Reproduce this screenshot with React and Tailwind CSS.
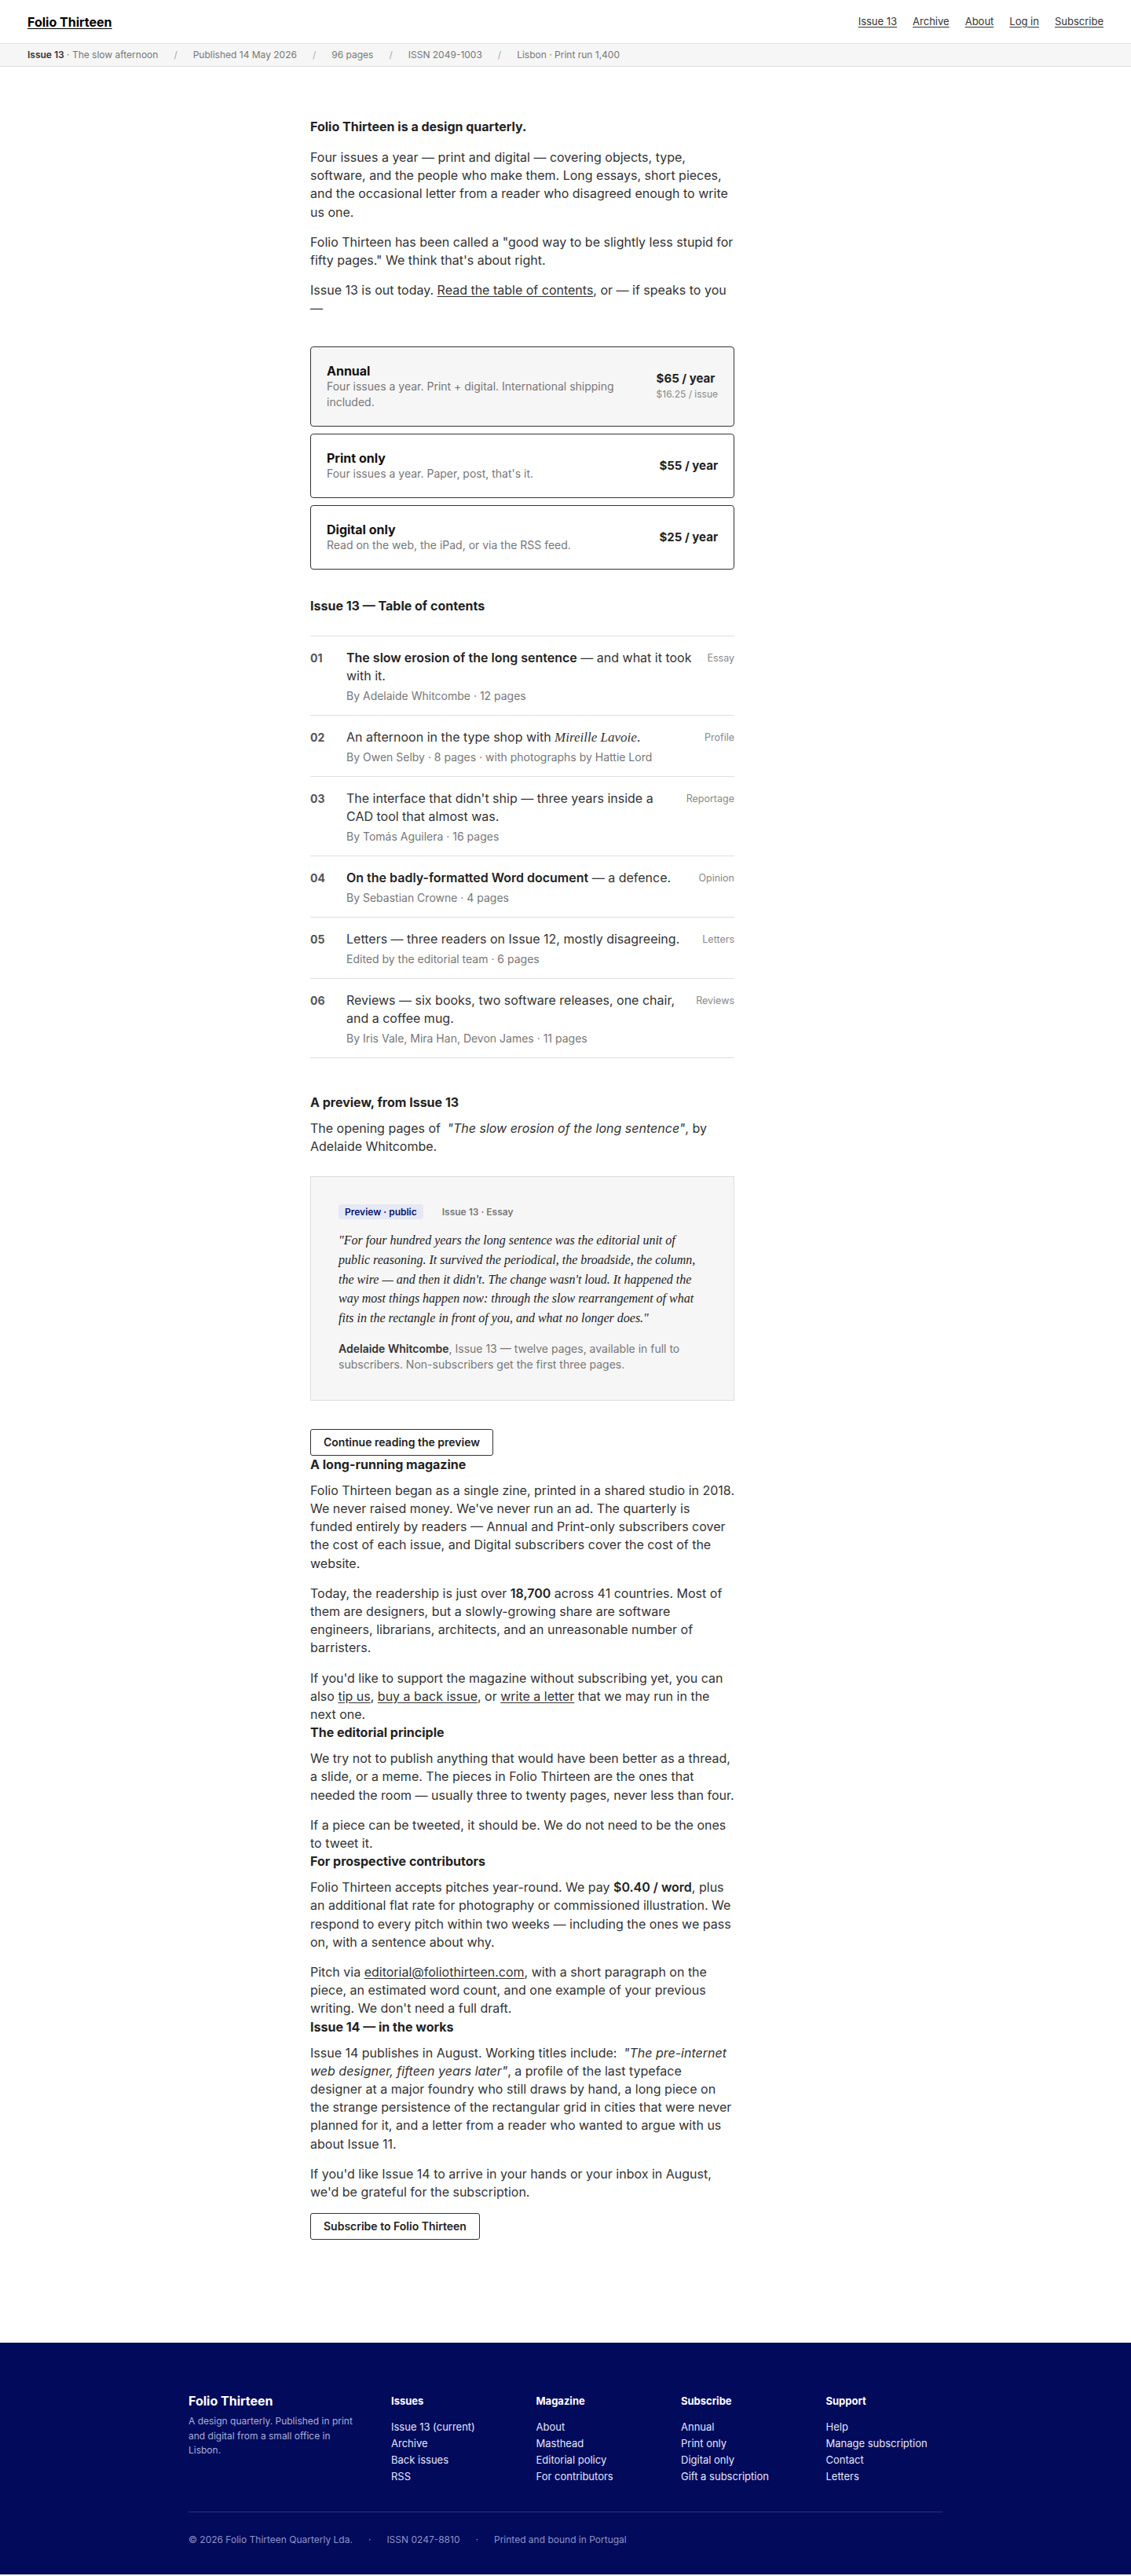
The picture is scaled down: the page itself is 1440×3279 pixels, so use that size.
const navLinks = ['Issue 13', 'Archive', 'About', 'Log in', 'Subscribe']

const plans = [
  {
    name: 'Annual',
    desc: 'Four issues a year. Print + digital. International shipping included.',
    price: '$65 / year',
    sub: '$16.25 / issue',
    active: true,
  },
  { name: 'Print only', desc: "Four issues a year. Paper, post, that's it.", price: '$55 / year' },
  { name: 'Digital only', desc: 'Read on the web, the iPad, or via the RSS feed.', price: '$25 / year' },
]

const toc = [
  {
    n: '01',
    title: (
      <>
        <strong className="font-semibold text-[#222]">The slow erosion of the long sentence</strong> — and what it took
        with it.
      </>
    ),
    meta: 'By Adelaide Whitcombe · 12 pages',
    tag: 'Essay',
  },
  {
    n: '02',
    title: (
      <>
        An afternoon in the type shop with{' '}
        <em className="font-['Liberation_Serif',serif] text-[17px]">Mireille Lavoie</em>.
      </>
    ),
    meta: 'By Owen Selby · 8 pages · with photographs by Hattie Lord',
    tag: 'Profile',
  },
  {
    n: '03',
    title: "The interface that didn't ship — three years inside a CAD tool that almost was.",
    meta: 'By Tomás Aguilera · 16 pages',
    tag: 'Reportage',
  },
  {
    n: '04',
    title: (
      <>
        <strong className="font-semibold text-[#222]">On the badly-formatted Word document</strong> — a defence.
      </>
    ),
    meta: 'By Sebastian Crowne · 4 pages',
    tag: 'Opinion',
  },
  {
    n: '05',
    title: 'Letters — three readers on Issue 12, mostly disagreeing.',
    meta: 'Edited by the editorial team · 6 pages',
    tag: 'Letters',
  },
  {
    n: '06',
    title: 'Reviews — six books, two software releases, one chair, and a coffee mug.',
    meta: 'By Iris Vale, Mira Han, Devon James · 11 pages',
    tag: 'Reviews',
  },
]

const footerCols = [
  { title: 'Issues', links: ['Issue 13 (current)', 'Archive', 'Back issues', 'RSS'] },
  { title: 'Magazine', links: ['About', 'Masthead', 'Editorial policy', 'For contributors'] },
  { title: 'Subscribe', links: ['Annual', 'Print only', 'Digital only', 'Gift a subscription'] },
  { title: 'Support', links: ['Help', 'Manage subscription', 'Contact', 'Letters'] },
]

function Heading({ children, className = '' }) {
  return <h2 className={`text-base font-bold leading-[23px] text-[#222] ${className}`}>{children}</h2>
}

function OutlineButton({ children, className = '' }) {
  return (
    <button
      className={`flex h-[34px] items-center rounded-[3px] border border-[#333] px-4 text-sm font-semibold text-[#222] ${className}`}
    >
      {children}
    </button>
  )
}

function Link({ children }) {
  return <a className="underline underline-offset-2">{children}</a>
}

export default function App() {
  return (
    <div className="min-h-screen bg-white font-[Inter,sans-serif] text-[#333]">
      {/* Top bar */}
      <header className="flex h-14 items-center justify-between border-b border-[#e3e3e3] px-[35px]">
        <a className="text-base font-bold text-black underline underline-offset-2">Folio Thirteen</a>
        <nav className="flex gap-5 text-[13px] text-[#333]">
          {navLinks.map((l) => (
            <a key={l} className="underline underline-offset-2">
              {l}
            </a>
          ))}
        </nav>
      </header>
      <div className="flex h-[29px] items-center gap-5 border-b border-[#dcdcdc] bg-[#f6f6f6] px-[35px] text-xs text-[#777]">
        <span>
          <span className="font-semibold text-[#333]">Issue 13</span> · The slow afternoon
        </span>
        <span className="text-[#aaa]">/</span>
        <span>Published 14 May 2026</span>
        <span className="text-[#aaa]">/</span>
        <span>96 pages</span>
        <span className="text-[#aaa]">/</span>
        <span>ISSN 2049-1003</span>
        <span className="text-[#aaa]">/</span>
        <span>Lisbon · Print run 1,400</span>
      </div>

      <main className="mx-auto w-[960px] pb-[131px] pl-[155px] pt-16">
        <div className="w-[540px] text-base leading-[23.2px]">
          {/* Intro */}
          <h1 className="mb-4 text-base font-bold leading-6 text-[#222]">Folio Thirteen is a design quarterly.</h1>
          <p className="mb-[15px]">
            Four issues a year — print and digital — covering objects, type, software, and the people who make them.
            Long essays, short pieces, and the occasional letter from a reader who disagreed enough to write us one.
          </p>
          <p className="mb-[15px]">
            Folio Thirteen has been called a "good way to be slightly less stupid for fifty pages." We think that's
            about right.
          </p>
          <p>
            Issue 13 is out today. <Link>Read the table of contents</Link>, or — if speaks to you —
          </p>

          {/* Plans */}
          <div className="mt-9 flex flex-col gap-[9px]">
            {plans.map((p) => (
              <div
                key={p.name}
                className={`flex items-center justify-between gap-6 rounded-[4px] border border-[#333] px-5 py-5 ${
                  p.active ? 'bg-[#f6f6f6]' : 'bg-white'
                }`}
              >
                <div className="min-w-0 flex-1">
                  <div className="text-base font-bold leading-5 text-[#111]">{p.name}</div>
                  <div className="text-sm leading-5 text-[#777]">{p.desc}</div>
                </div>
                <div className="shrink-0">
                  <div className="text-[15px] font-bold leading-5 text-[#222]">{p.price}</div>
                  {p.sub && <div className="text-xs leading-5 text-[#888]">{p.sub}</div>}
                </div>
              </div>
            ))}
          </div>

          {/* Table of contents */}
          <Heading className="mt-[35px] mb-[26px]">Issue 13 — Table of contents</Heading>
          <div className="border-b border-[#e0e0e0]">
            {toc.map((item) => (
              <div key={item.n} className="flex border-t border-[#e0e0e0] pb-[14px] pt-4">
                <div className="w-[46px] shrink-0 text-sm font-bold leading-[23px] text-[#555]">{item.n}</div>
                <div className="min-w-0 flex-1">
                  <div className="text-base leading-[23px] text-[#333]">{item.title}</div>
                  <div className="mt-1 text-sm leading-5 text-[#777]">{item.meta}</div>
                </div>
                <div className="ml-4 shrink-0 text-[12.5px] leading-[23px] text-[#888]">{item.tag}</div>
              </div>
            ))}
          </div>

          {/* Preview */}
          <Heading className="mt-[45px] mb-2.5">A preview, from Issue 13</Heading>
          <p>
            The opening pages of <em className="ml-1">"The slow erosion of the long sentence"</em>, by Adelaide
            Whitcombe.
          </p>
          <div className="mt-[26px] border border-[#dedede] bg-[#f6f6f6] p-[35px]">
            <div className="flex items-center gap-6">
              <span className="flex h-[19px] items-center rounded-[3px] bg-[#e6e8f6] px-2 text-xs font-semibold text-[#0b1468]">
                Preview · public
              </span>
              <span className="text-xs font-semibold text-[#777]">Issue 13 · Essay</span>
            </div>
            <blockquote className="mt-[15px] font-['Liberation_Serif',serif] text-base italic leading-[24.75px] text-[#222]">
              "For four hundred years the long sentence was the editorial unit of public reasoning. It survived the
              periodical, the broadside, the column, the wire — and then it didn't. The change wasn't loud. It happened
              the way most things happen now: through the slow rearrangement of what fits in the rectangle in front of
              you, and what no longer does."
            </blockquote>
            <p className="mt-4 text-sm leading-5 text-[#777]">
              <strong className="font-semibold text-[#333]">Adelaide Whitcombe</strong>, Issue 13 — twelve pages,
              available in full to subscribers. Non-subscribers get the first three pages.
            </p>
          </div>
          <OutlineButton className="mt-9">Continue reading the preview</OutlineButton>

          {/* About */}
          <Heading className="mb-2.5">A long-running magazine</Heading>
          <p className="mb-[15px]">
            Folio Thirteen began as a single zine, printed in a shared studio in 2018. We never raised money. We've
            never run an ad. The quarterly is funded entirely by readers — Annual and Print-only subscribers cover the
            cost of each issue, and Digital subscribers cover the cost of the website.
          </p>
          <p className="mb-[15px]">
            Today, the readership is just over <strong className="font-semibold text-[#222]">18,700</strong> across 41
            countries. Most of them are designers, but a slowly-growing share are software engineers, librarians,
            architects, and an unreasonable number of barristers.
          </p>
          <p>
            If you'd like to support the magazine without subscribing yet, you can also <Link>tip us</Link>,{' '}
            <Link>buy a back issue</Link>, or <Link>write a letter</Link> that we may run in the next one.
          </p>

          <Heading className="mb-2.5">The editorial principle</Heading>
          <p className="mb-[15px]">
            We try not to publish anything that would have been better as a thread, a slide, or a meme. The pieces in
            Folio Thirteen are the ones that needed the room — usually three to twenty pages, never less than four.
          </p>
          <p>If a piece can be tweeted, it should be. We do not need to be the ones to tweet it.</p>

          <Heading className="mb-2.5">For prospective contributors</Heading>
          <p className="mb-[15px]">
            Folio Thirteen accepts pitches year-round. We pay{' '}
            <strong className="font-semibold text-[#222]">$0.40 / word</strong>, plus an additional flat rate for
            photography or commissioned illustration. We respond to every pitch within two weeks — including the ones we
            pass on, with a sentence about why.
          </p>
          <p>
            Pitch via <Link>editorial@foliothirteen.com</Link>, with a short paragraph on the piece, an estimated word
            count, and one example of your previous writing. We don't need a full draft.
          </p>

          <Heading className="mb-2.5">Issue 14 — in the works</Heading>
          <p className="mb-[15px]">
            Issue 14 publishes in August. Working titles include:{' '}
            <em className="ml-1">"The pre-internet web designer, fifteen years later"</em>, a profile of the last
            typeface designer at a major foundry who still draws by hand, a long piece on the strange persistence of
            the rectangular grid in cities that were never planned for it, and a letter from a reader who wanted to
            argue with us about Issue 11.
          </p>
          <p>
            If you'd like Issue 14 to arrive in your hands or your inbox in August, we'd be grateful for the
            subscription.
          </p>
          <OutlineButton className="mt-[15px]">Subscribe to Folio Thirteen</OutlineButton>
        </div>
      </main>

      {/* Footer */}
      <footer className="bg-[#020a5c] pt-16 pb-[35px]">
        <div className="mx-auto w-[960px]">
          <div className="grid grid-cols-[222px_repeat(4,1fr)] gap-9">
            <div>
              <div className="text-base font-bold leading-5 text-white">Folio Thirteen</div>
              <p className="mt-[7px] text-xs leading-[18.5px] text-[#a9aed6]">
                A design quarterly. Published in print and digital from a small office in Lisbon.
              </p>
            </div>
            {footerCols.map((c) => (
              <div key={c.title}>
                <div className="mb-[13px] text-[13px] font-bold leading-5 text-white">{c.title}</div>
                <ul className="flex flex-col gap-px text-[13px] leading-5 text-[#e4e6fa]">
                  {c.links.map((l) => (
                    <li key={l}>{l}</li>
                  ))}
                </ul>
              </div>
            ))}
          </div>
          <div className="mt-[35px] flex gap-5 border-t border-[#2a3278] pt-[26px] text-xs leading-[18px] text-[#8d93c6]">
            <span>© 2026 Folio Thirteen Quarterly Lda.</span>
            <span>·</span>
            <span>ISSN 0247-8810</span>
            <span>·</span>
            <span>Printed and bound in Portugal</span>
          </div>
        </div>
      </footer>
    </div>
  )
}
